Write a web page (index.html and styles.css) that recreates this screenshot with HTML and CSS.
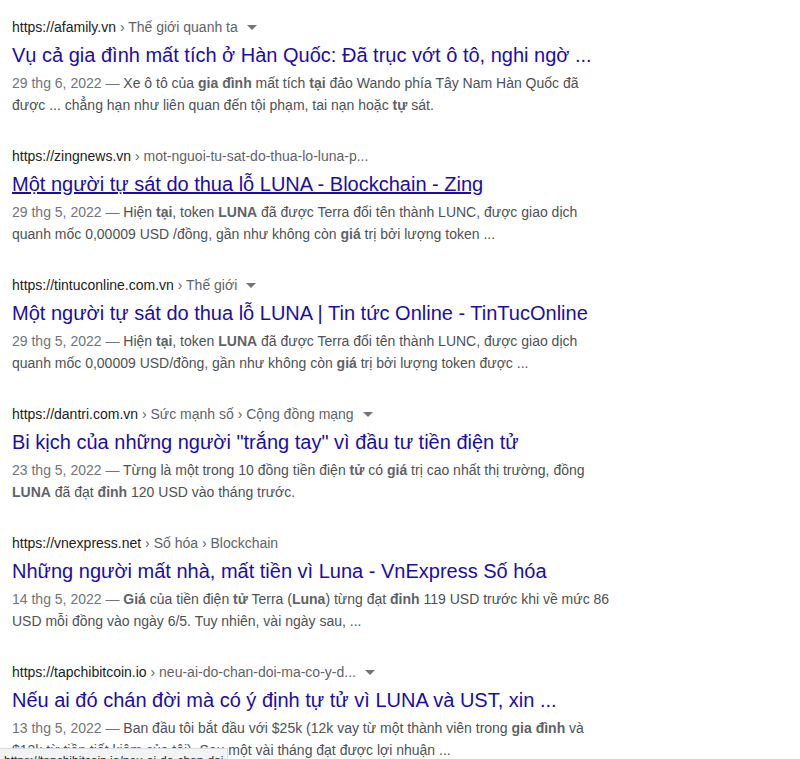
FILE: index.html
```html
<!DOCTYPE html>
<html lang="vi">
<head>
<meta charset="utf-8">
<link rel="stylesheet" href="styles.css">
</head>
<body>
<div class="results">
  <div class="result">
    <div class="cite"><span class="host">https://afamily.vn</span><span class="crumb"> › Thế giới quanh ta</span><span class="arrow"></span></div>
    <a class="title" href="#">Vụ cả gia đình mất tích ở Hàn Quốc: Đã trục vớt ô tô, nghi ngờ ...</a>
    <div class="snippet"><span class="date">29 thg 6, 2022 — </span>Xe ô tô của <b>gia đình</b> mất tích <b>tại</b> đảo Wando phía Tây Nam Hàn Quốc đã được ... chẳng hạn như liên quan đến tội phạm, tai nạn hoặc <b>tự</b> sát.</div>
  </div>
  <div class="result">
    <div class="cite"><span class="host">https://zingnews.vn</span><span class="crumb"> › mot-nguoi-tu-sat-do-thua-lo-luna-p...</span></div>
    <a class="title hover" href="#">Một người tự sát do thua lỗ LUNA - Blockchain - Zing</a>
    <div class="snippet"><span class="date">29 thg 5, 2022 — </span>Hiện <b>tại</b>, token <b>LUNA</b> đã được Terra đổi tên thành LUNC, được giao dịch quanh mốc 0,00009 USD /đồng, gần như không còn <b>giá</b> trị bởi lượng token ...</div>
  </div>
  <div class="result">
    <div class="cite"><span class="host">https://tintuconline.com.vn</span><span class="crumb"> › Thế giới</span><span class="arrow"></span></div>
    <a class="title" href="#">Một người tự sát do thua lỗ LUNA | Tin tức Online - TinTucOnline</a>
    <div class="snippet"><span class="date">29 thg 5, 2022 — </span>Hiện <b>tại</b>, token <b>LUNA</b> đã được Terra đổi tên thành LUNC, được giao dịch quanh mốc 0,00009 USD/đồng, gần như không còn <b>giá</b> trị bởi lượng token được ...</div>
  </div>
  <div class="result">
    <div class="cite"><span class="host">https://dantri.com.vn</span><span class="crumb"> › Sức mạnh số › Cộng đồng mạng</span><span class="arrow"></span></div>
    <a class="title" href="#">Bi kịch của những người "trắng tay" vì đầu tư tiền điện tử</a>
    <div class="snippet"><span class="date">23 thg 5, 2022 — </span>Từng là một trong 10 đồng tiền điện <b>tử</b> có <b>giá</b> trị cao nhất thị trường, đồng <b>LUNA</b> đã đạt <b>đỉnh</b> 120 USD vào tháng trước.</div>
  </div>
  <div class="result">
    <div class="cite"><span class="host">https://vnexpress.net</span><span class="crumb"> › Số hóa › Blockchain</span></div>
    <a class="title" href="#">Những người mất nhà, mất tiền vì Luna - VnExpress Số hóa</a>
    <div class="snippet"><span class="date">14 thg 5, 2022 — </span><b>Giá</b> của tiền điện <b>tử</b> Terra (<b>Luna</b>) từng đạt <b>đỉnh</b> 119 USD trước khi về mức 86 USD mỗi đồng vào ngày 6/5. Tuy nhiên, vài ngày sau, ...</div>
  </div>
  <div class="result">
    <div class="cite"><span class="host">https://tapchibitcoin.io</span><span class="crumb"> › neu-ai-do-chan-doi-ma-co-y-d...</span><span class="arrow"></span></div>
    <a class="title" href="#">Nếu ai đó chán đời mà có ý định tự tử vì LUNA và UST, xin ...</a>
    <div class="snippet"><span class="date">13 thg 5, 2022 — </span>Ban đầu tôi bắt đầu với $25k (12k vay từ một thành viên trong <b>gia đình</b> và $13k từ tiền tiết kiệm của tôi). Sau một vài tháng đạt được lợi nhuận ...</div>
  </div>
</div>
<div class="status">https://tapchibitcoin.io/neu-ai-do-chan-doi-1331661.html</div>
</body>
</html>
```
FILE: styles.css
```css
html, body {
  margin: 0;
  padding: 0;
  background: #fff;
}
body {
  font-family: "Liberation Sans", Arial, sans-serif;
  padding: 17px 0 0 12px;
  overflow: hidden;
  height: 759px;
  box-sizing: border-box;
}
.results {
  width: 610px;
  display: flex;
  flex-direction: column;
  gap: 30px;
}
.result {
  display: flex;
  flex-direction: column;
}
.cite {
  font-size: 14px;
  line-height: 20px;
  white-space: nowrap;
  display: flex;
  align-items: center;
}
.host {
  color: #202124;
}
.crumb {
  color: #5f6368;
  white-space: pre;
}
.arrow {
  width: 0;
  height: 0;
  border-left: 5px solid transparent;
  border-right: 5px solid transparent;
  border-top: 5px solid #70757a;
  margin-left: 9px;
  margin-top: 1px;
}
.title {
  margin-top: 5px;
  font-size: 20px;
  line-height: 26px;
  color: #1a0dab;
  text-decoration: none;
  white-space: nowrap;
}
.title.hover {
  text-decoration: underline;
}
.snippet {
  margin-top: 4px;
  font-size: 14px;
  line-height: 22px;
  color: #4d5156;
  width: 600px;
}
.snippet b {
  color: #5f6368;
  font-weight: bold;
}
.date {
  color: #70757a;
}
.status {
  position: fixed;
  left: 0;
  top: 748px;
  width: 228px;
  height: 22px;
  box-sizing: border-box;
  padding: 4px 4px;
  background: #f1f3f4;
  border: 1px solid #dadce0;
  border-left: none;
  font-size: 12px;
  line-height: 16px;
  color: #202124;
  white-space: nowrap;
  overflow: hidden;
}
```
